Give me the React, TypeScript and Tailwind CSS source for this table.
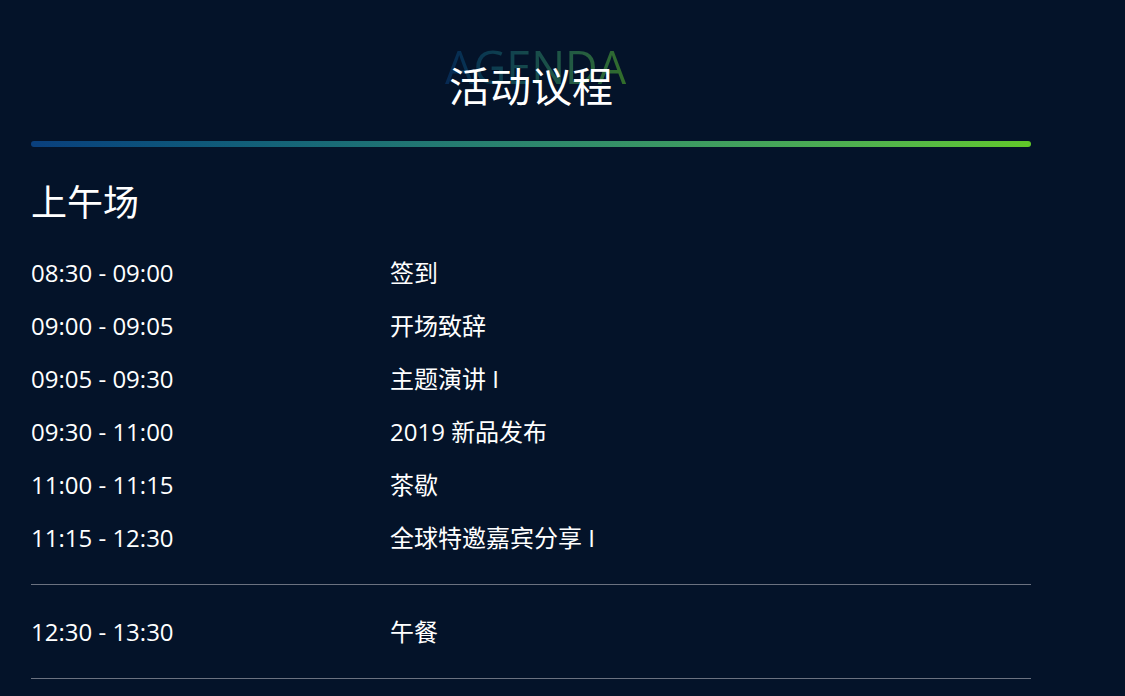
const morning = [
  { time: '08:30 - 09:00', title: '签到' },
  { time: '09:00 - 09:05', title: '开场致辞' },
  { time: '09:05 - 09:30', title: '主题演讲 I' },
  { time: '09:30 - 11:00', title: '2019 新品发布' },
  { time: '11:00 - 11:15', title: '茶歇' },
  { time: '11:15 - 12:30', title: '全球特邀嘉宾分享 I' },
];

function Row({ time, title }: { time: string; title: string }) {
  return (
    <div className="flex h-[53px] items-center text-[24px] leading-none">
      <div className="w-[359px] shrink-0">{time}</div>
      <div>{title}</div>
    </div>
  );
}

export default function App() {
  return (
    <div
      className="min-h-[696px] bg-[#041329] text-white"
      style={{ fontFamily: '"Open Sans", "Noto Sans CJK SC", sans-serif' }}
    >
      <div className="ml-[31px] w-[1000px] pt-[48px]">
        <div className="relative flex h-[80px] justify-center">
          <span className="absolute top-[-12px] left-[414px] bg-linear-to-r from-[#0a3f7d] to-[#62c928] bg-clip-text text-[45px] leading-[61px] text-transparent opacity-50">
            AGENDA
          </span>
          <h2 className="relative mt-[14px] text-[41px] leading-[48px]">活动议程</h2>
        </div>
        <div className="mt-[13px] h-[6px] rounded-full bg-linear-to-r from-[#0a3f7d] to-[#62c928]" />

        <h3 className="mt-[29px] text-[36px] leading-[54px]">上午场</h3>
        <div className="mt-[16px]">
          {morning.map((r) => (
            <Row key={r.time} {...r} />
          ))}
        </div>
        <div className="mt-[20px] border-t border-[#6b7280] py-[20px]">
          <Row time="12:30 - 13:30" title="午餐" />
        </div>
        <div className="border-t border-[#6b7280]" />
      </div>
    </div>
  );
}
